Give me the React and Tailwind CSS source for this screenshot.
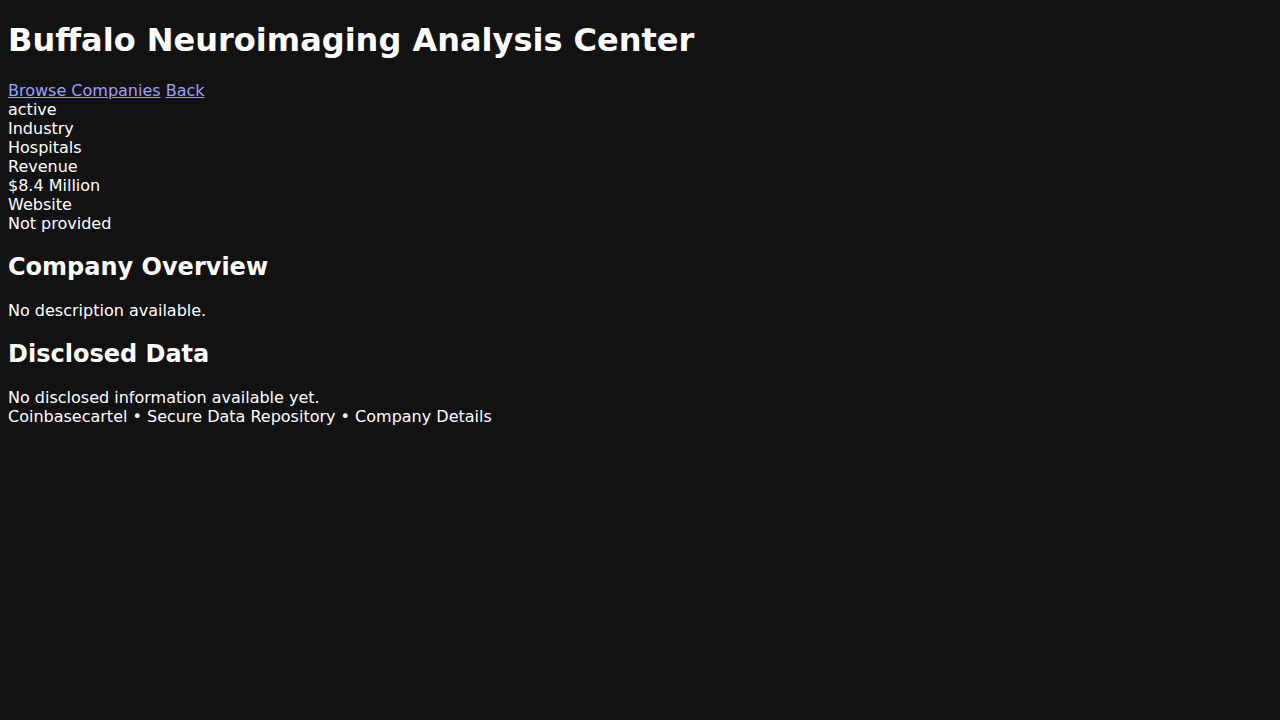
import React from 'react';

const details = [
  'active',
  'Industry',
  'Hospitals',
  'Revenue',
  '$8.4 Million',
  'Website',
  'Not provided',
];

export default function App() {
  return (
    <div
      className="min-h-screen bg-[#121212] text-white px-2 pt-[21.44px] text-[16px] leading-[normal]"
      style={{ fontFamily: '"DejaVu Sans", sans-serif' }}
    >
      <h1 className="text-[32px] leading-[normal] font-bold mb-[21.44px]">Buffalo Neuroimaging Analysis Center</h1>

      {/* Nav */}
      <div>
        <a href="#" className="text-[#9e9eff] underline">Browse Companies</a>{' '}
        <a href="#" className="text-[#9e9eff] underline">Back</a>
      </div>

      {/* Company meta */}
      {details.map((d) => (
        <div key={d}>{d}</div>
      ))}

      <h2 className="text-[24px] leading-[normal] font-bold my-[19.92px]">Company Overview</h2>
      <p>No description available.</p>

      <h2 className="text-[24px] leading-[normal] font-bold my-[19.92px]">Disclosed Data</h2>
      <div>No disclosed information available yet.</div>

      <footer>Coinbasecartel • Secure Data Repository • Company Details</footer>
    </div>
  );
}
